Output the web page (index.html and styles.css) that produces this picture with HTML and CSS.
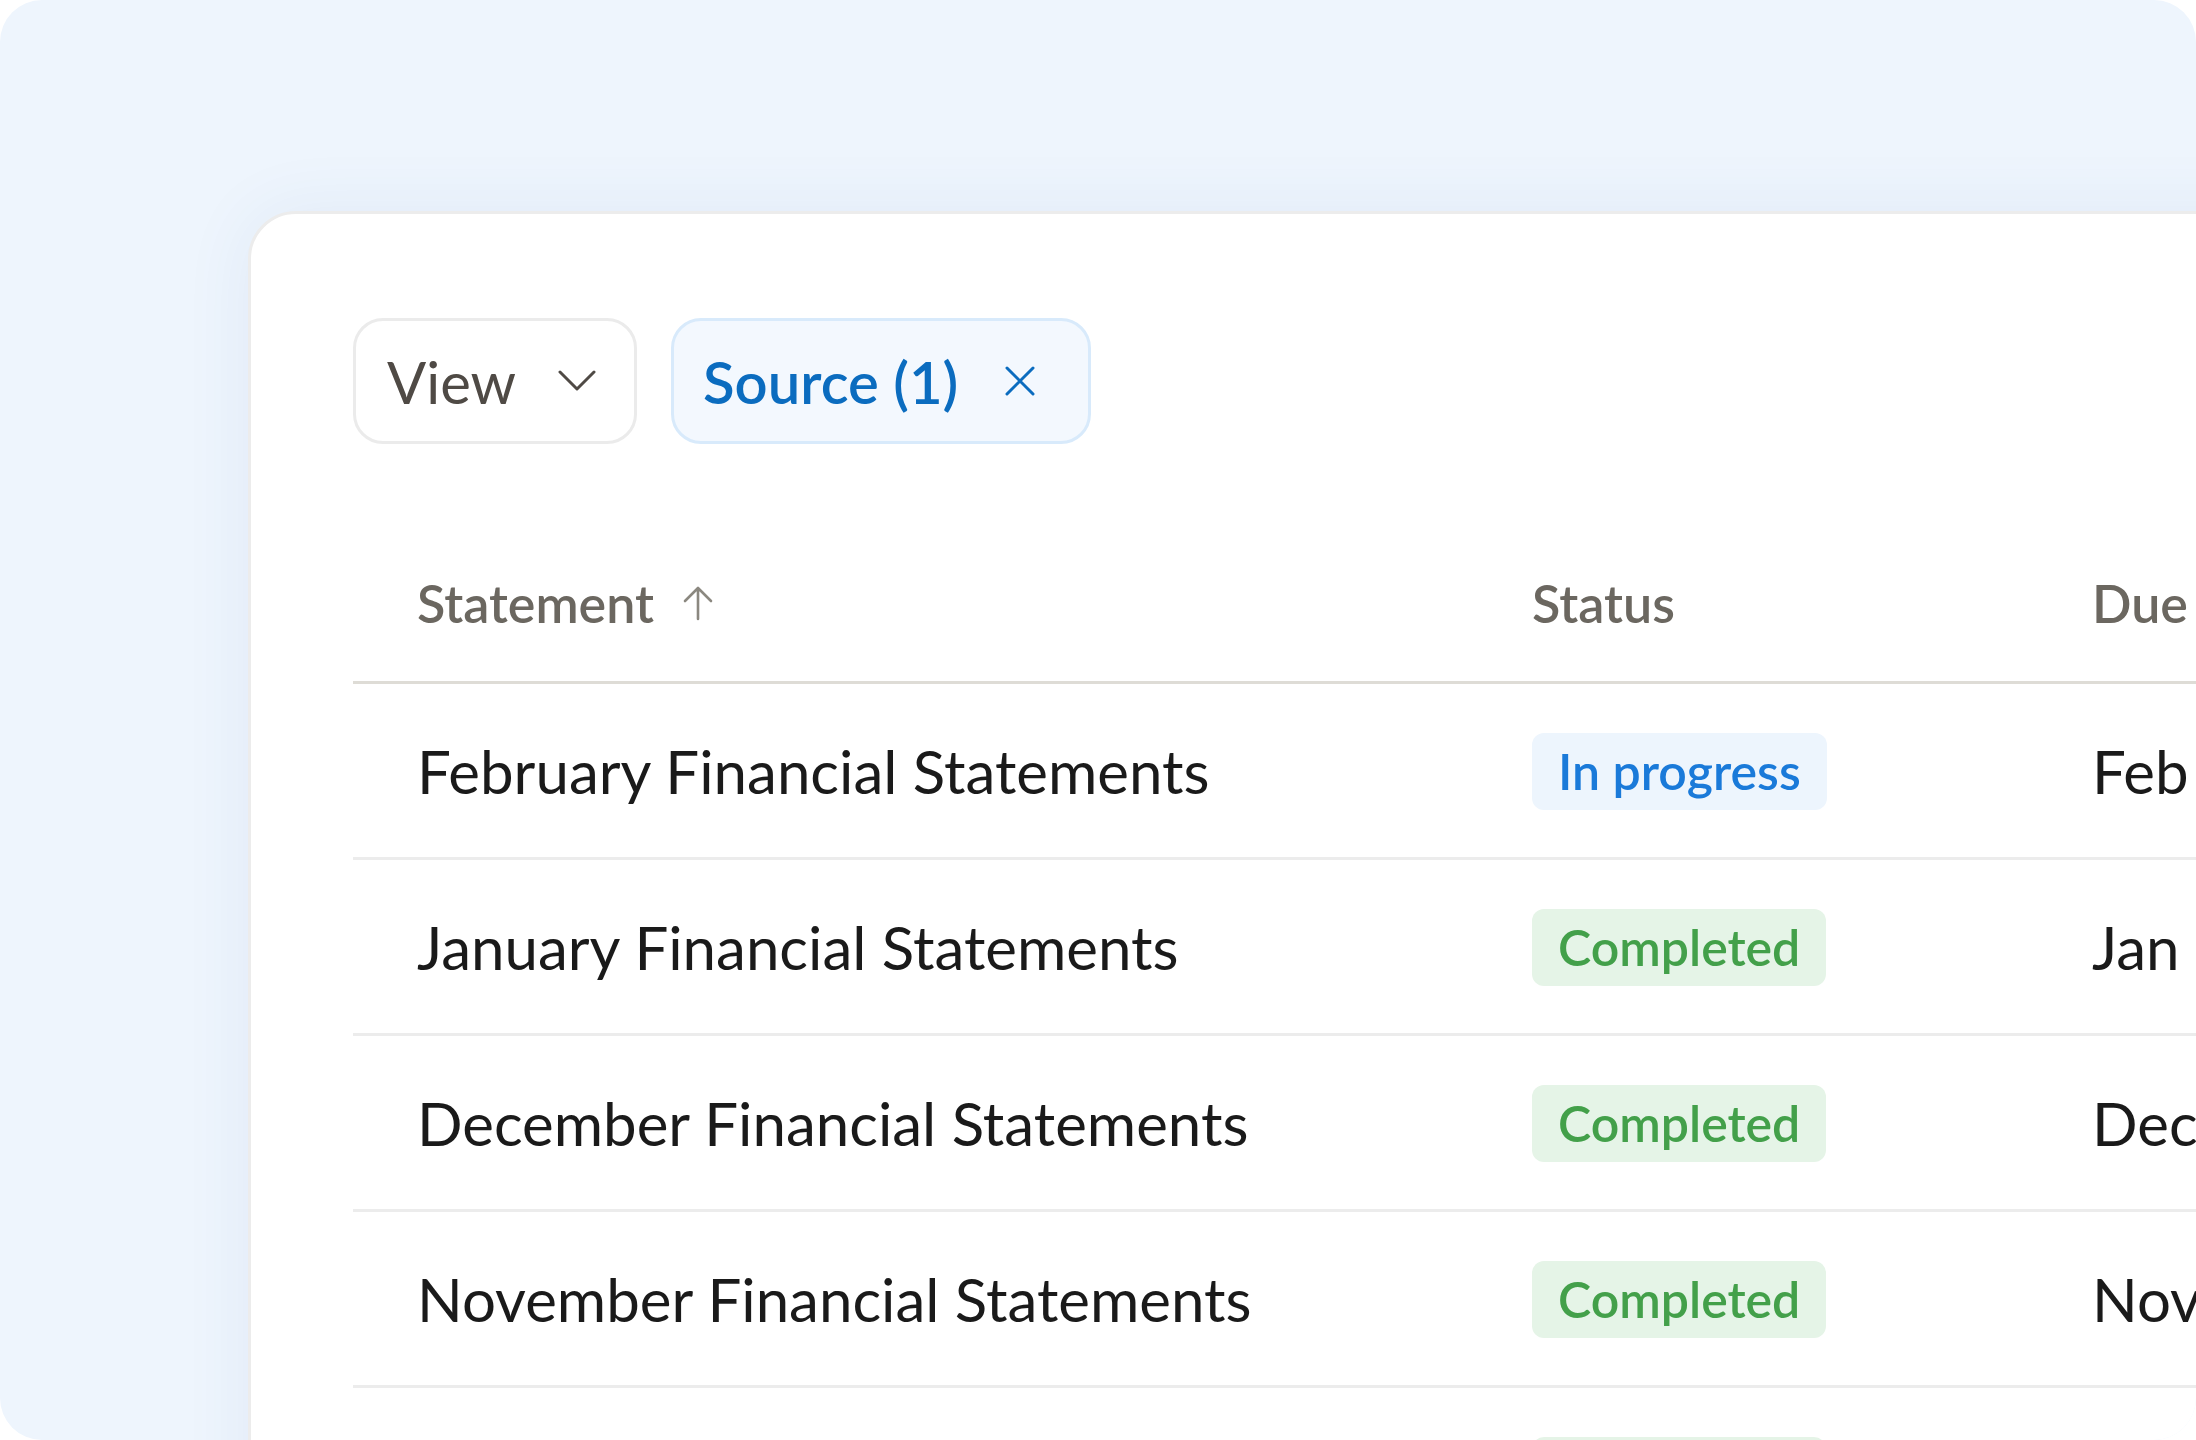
FILE: index.html
```html
<!DOCTYPE html>
<html lang="en">
<head>
<meta charset="UTF-8" />
<meta name="viewport" content="width=device-width, initial-scale=1" />
<title>Statements</title>
<link rel="stylesheet" href="styles.css">
</head>
<body>

<div class="frame">
  <div class="card">

    <!-- FILTERS -->
    <div class="filters">
      <button class="filter-btn">
        <span>View</span>
        <svg class="chevron" viewBox="0 0 38 22" width="38" height="22">
          <path d="M2 2 L19 19 L36 2" fill="none" stroke="currentColor" stroke-width="3" stroke-linecap="round" stroke-linejoin="round"/>
        </svg>
      </button>
      <button class="filter-btn filter-active">
        <span>Source (1)</span>
        <svg class="close" viewBox="0 0 32 32" width="32" height="32">
          <path d="M3 3 L29 29 M29 3 L3 29" fill="none" stroke="currentColor" stroke-width="3" stroke-linecap="round"/>
        </svg>
      </button>
    </div>

    <!-- TABLE -->
    <div class="table">
      <div class="row head">
        <div class="cell">Statement
          <svg class="sort" viewBox="0 0 36 36" width="36" height="36">
            <path d="M18 3 V34 M5 16 L18 3 L31 16" fill="none" stroke="currentColor" stroke-width="2.6" stroke-linecap="round" stroke-linejoin="round"/>
          </svg>
        </div>
        <div class="cell">Status</div>
        <div class="cell">Due</div>
      </div>
      <div class="row">
        <div class="cell">February Financial Statements</div>
        <div class="cell"><span class="badge progress">In progress</span></div>
        <div class="cell">Feb 28</div>
      </div>
      <div class="row">
        <div class="cell">January Financial Statements</div>
        <div class="cell"><span class="badge done">Completed</span></div>
        <div class="cell">Jan 31</div>
      </div>
      <div class="row">
        <div class="cell">December Financial Statements</div>
        <div class="cell"><span class="badge done">Completed</span></div>
        <div class="cell">Dec 31</div>
      </div>
      <div class="row">
        <div class="cell">November Financial Statements</div>
        <div class="cell"><span class="badge done">Completed</span></div>
        <div class="cell">Nov 30</div>
      </div>
      <div class="row">
        <div class="cell">October Financial Statements</div>
        <div class="cell"><span class="badge done">Completed</span></div>
        <div class="cell">Oct 31</div>
      </div>
    </div>

  </div>
</div>

</body>
</html>
```

FILE: styles.css
```css
body {
  margin: 0;
  background: #ffffff;
  font-family: 'Lato', 'Noto Sans', sans-serif;
  color: #1a1a1a;
}
.frame {
  width: 2196px;
  height: 1440px;
  background: #eef5fd;
  border-radius: 42px;
  overflow: hidden;
  padding: 211px 0 0 248px;
  box-sizing: border-box;
}
/* CARD */
.card {
  width: 2200px;
  height: 1400px;
  background: #ffffff;
  border: 3px solid #ececec;
  border-radius: 48px;
  box-shadow: 0 0 70px rgba(40, 90, 160, 0.07);
  padding: 104px 0 0 102px;
  box-sizing: border-box;
}
.filters {
  display: flex;
  gap: 34px;
}
.filter-btn {
  display: flex;
  align-items: center;
  height: 126px;
  padding: 0 38px 0 31px;
  background: #ffffff;
  border: 3px solid #ebebeb;
  border-radius: 30px;
  font-family: inherit;
  font-size: 58px;
  color: #4f4a45;
  box-sizing: border-box;
}
.filter-btn .chevron {
  margin-left: 42px;
}
.filter-active {
  background: #f3f8fe;
  border-color: #d8eafb;
  color: #0b6cbf;
  font-weight: 600;
  padding: 0 52px 0 29px;
}
.filter-active .close {
  margin-left: 46px;
}
/* TABLE */
.table {
  margin-top: 80px;
}
.row {
  display: grid;
  grid-template-columns: 1115px 560px 400px;
  align-items: center;
  height: 176px;
  border-bottom: 3px solid #ececec;
  box-sizing: border-box;
}
.row .cell {
  padding-left: 64px;
  font-size: 60px;
  white-space: nowrap;
}
.head {
  height: 160px;
  border-bottom-color: #dedcd6;
}
.head .cell {
  display: flex;
  align-items: center;
  font-size: 52px;
  font-weight: 600;
  color: #6b6760;
}
.head .sort {
  margin-left: 26px;
  color: #8b8880;
}
.badge {
  display: inline-block;
  padding: 8px 26px 9px 26px;
  border-radius: 12px;
  font-size: 50px;
  font-weight: 600;
}
.progress {
  background: #edf5fd;
  color: #1a7ad9;
}
.done {
  background: #e5f4e7;
  color: #43a04a;
}
```
